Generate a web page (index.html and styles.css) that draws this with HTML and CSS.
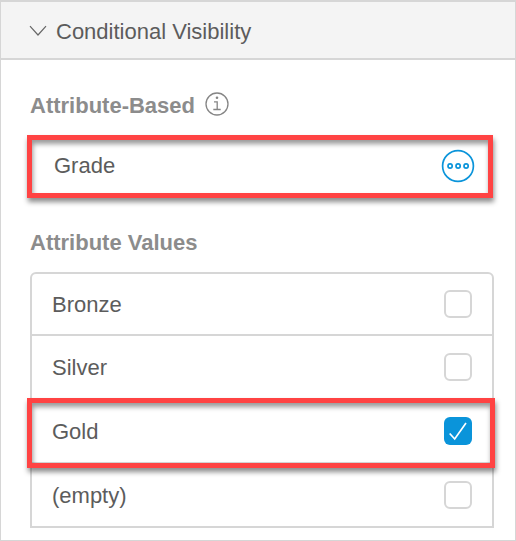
FILE: index.html
```
<!DOCTYPE html>
<html lang="en">
<head>
<meta charset="utf-8">
<title>Conditional Visibility</title>
<link rel="stylesheet" href="styles.css">
</head>
<body>
<section class="panel">
  <header class="panel-header">
    <svg class="chevron" width="18" height="12" viewBox="0 0 18 12"><path d="M1 1.2 L9 10 L17 1.2"/></svg>
    <span>Conditional Visibility</span>
  </header>
  <div class="panel-body">
    <h2 class="label label-attribute">Attribute-Based
      <svg class="info" width="24" height="24" viewBox="0 0 24 24"><circle cx="12" cy="12" r="11"/><path d="M9 9.8h3.2v7.7M8.3 17.5h7.4"/><circle class="info-dot" cx="12" cy="5.8" r="1.3"/></svg>
    </h2>
    <div class="attribute">
      <span>Grade</span>
      <svg class="more" width="34" height="34" viewBox="0 0 34 34"><circle cx="17" cy="17" r="15.4"/><g class="more-dots"><circle cx="9.1" cy="17" r="2.1"/><circle cx="17.1" cy="17" r="2.1"/><circle cx="25.1" cy="17" r="2.1"/></g></svg>
    </div>
    <h2 class="label label-values">Attribute Values</h2>
    <ul class="values">
      <li class="row"><span>Bronze</span><i class="box"></i></li>
      <li class="row"><span>Silver</span><i class="box"></i></li>
      <li class="row marked"><span>Gold</span><i class="box checked"><svg width="28" height="28" viewBox="0 0 28 28"><path d="M5.7 16.5 L10.7 22 L22 6"/></svg></i></li>
      <li class="row"><span>(empty)</span><i class="box"></i></li>
    </ul>
  </div>
</section>
</body>
</html>
```
FILE: styles.css
```
* { box-sizing: border-box; }
body {
  margin: 0;
  background: #fff;
  color: #5c5c5c;
  font: 22px/26px "Liberation Sans", Arial, sans-serif;
}
svg { display: block; fill: none; }
.panel {
  height: 541px;
  border: 1px solid #d6d6d6;
  border-top-width: 2px;
}
.panel-header {
  display: flex;
  align-items: center;
  gap: 9px;
  height: 58px;
  padding: 2px 0 0 28px;
  border-bottom: 2px solid #d6d6d6;
  background: #f4f4f4;
}
.panel-header span { padding-top: 2px; }
.chevron { stroke: #666; stroke-width: 1.2; }
.panel-body { padding: 33px 21px 0 29px; }
.label {
  display: flex;
  align-items: center;
  gap: 10px;
  height: 26px;
  margin: 0;
  color: #8c8c8c;
  font-size: 22px;
  font-weight: bold;
}
.info { stroke: #858585; stroke-width: 1.3; margin-top: -5px; }
.info .info-dot { fill: #858585; stroke: none; }
.attribute {
  display: flex;
  align-items: center;
  justify-content: space-between;
  height: 63px;
  margin: 16px 1px 0 -3px;
  padding: 0 13px 2px 22px;
  border: 5px solid #ff4343;
  box-shadow: 1px 4px 5px rgba(0, 0, 0, .45), inset 1px 4px 5px rgba(0, 0, 0, .4);
}
.more { stroke: #0a94da; stroke-width: 1.7; }
.label-values { margin-top: 32px; }
.values {
  margin: 16px 0 0;
  padding: 0;
  list-style: none;
  border: 2px solid #d6d6d6;
  border-radius: 6px 6px 0 0;
}
.row {
  position: relative;
  display: flex;
  align-items: center;
  justify-content: space-between;
  height: 64px;
  padding: 0 20px;
  border-top: 2px solid #d6d6d6;
}
.row span { padding-top: 2px; }
.row:first-child { height: 60px; border-top: 0; }
.row:last-child { z-index: 0; }
.marked { z-index: 1; }
.marked::after {
  content: "";
  position: absolute;
  inset: -2px -3px -6px -5px;
  border: 5px solid #ff4343;
  box-shadow: 1px 4px 5px rgba(0, 0, 0, .45), inset 1px 4px 5px rgba(0, 0, 0, .4);
}
.box {
  width: 28px;
  height: 28px;
  border: 2px solid #d6d6d6;
  border-radius: 6px;
}
.checked { border: 0; background: #0a94da; }
.checked svg { stroke: #fff; stroke-width: 1.7; }
```
